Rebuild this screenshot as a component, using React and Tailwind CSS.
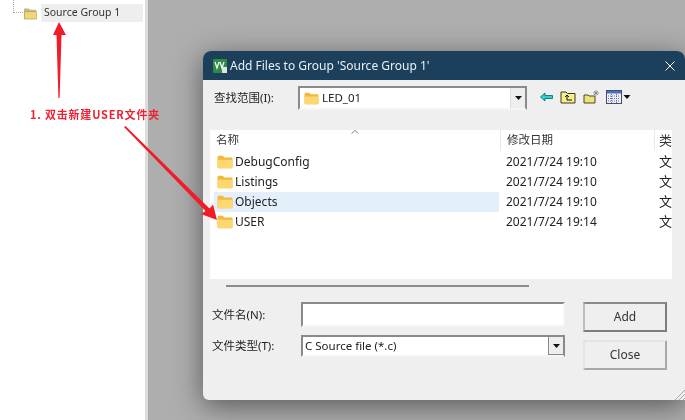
const UI = { fontFamily: '"Noto Sans","Noto Sans CJK SC",sans-serif' };

function Folder({ className = "" }) {
  return (
    <svg viewBox="0 0 16 14" className={className}>
      <path d="M0.5 2.2Q0.5 0.8 1.8 0.8H5.6L7.4 2.4H14.4Q15.5 2.4 15.5 3.5V12.2Q15.5 13.3 14.4 13.3H1.6Q0.5 13.3 0.5 12.2Z" fill="#f3b93a" />
      <path d="M0.5 4.8H15.5V12.2Q15.5 13.3 14.4 13.3H1.6Q0.5 13.3 0.5 12.2Z" fill="#fdd76f" />
    </svg>
  );
}

function Arrow({ className = "" }) {
  return (
    <svg viewBox="0 0 7 4" className={className}>
      <path d="M0 0H7L3.5 4Z" fill="#111" />
    </svg>
  );
}

function Row({ name, date, active }) {
  return (
    <div className="flex h-5 items-center">
      <div className={`ml-1 flex h-5 w-[285px] items-center gap-[2px] pl-[3px] ${active ? "bg-[#e3f0fb]" : ""}`}>
        <Folder className="h-[14px] w-[16px]" />
        <span className="text-[12px] text-[#222]">{name}</span>
      </div>
      <div className="flex h-5 w-[154px] items-center pl-[7px] text-[12px] text-[#222]">{date}</div>
      <div className="pl-[6px] text-[13px] text-[#222]">文</div>
    </div>
  );
}

export default function App() {
  return (
    <div className="flex h-[420px] w-[685px] overflow-hidden bg-white blur-[0.4px]" style={UI}>
      <aside className="w-[145px] shrink-0 bg-white pl-[13px] pr-[2px] pt-[4px]">
        <div className="flex h-[18px] items-center">
          <div className="mb-[9px] mt-[-4px] h-[13px] w-[10px] self-start border-b border-l border-dotted border-[#aaa]" />
          <svg viewBox="0 0 16 14" className="h-[13px] w-[15px]">
            <path d="M1 3V1.5H6L7.5 3H14V13H1Z" fill="#c9b781" />
            <path d="M1.5 5H14.5V13H1.5Z" fill="#efd679" stroke="#a9975f" strokeWidth=".6" />
          </svg>
          <div className="ml-[3px] flex h-[18px] flex-1 items-center bg-[#eeeeee] pl-[3px] text-[10.5px] text-[#333]">
            Source Group 1
          </div>
        </div>
      </aside>
      <div className="w-[3px] shrink-0 bg-[#dcdcdc]" />
      <main className="relative flex-1 bg-[#aeaeae]">
        <section className="absolute left-[55px] top-[51px] flex h-[349px] w-[482px] flex-col overflow-hidden rounded-t-[8px] rounded-bl-[6px] bg-[#efefef] shadow-[0_6px_28px_rgba(30,30,30,0.6)]">
          <header className="flex h-[29px] shrink-0 items-center bg-[#1c3f5b] pl-[10px] pr-[10px] text-white">
            <svg viewBox="0 0 14 14" className="h-[14px] w-[14px]">
              <rect width="14" height="14" rx="1" fill="#2f8a45" />
              <path d="M2 3L4 9L6 3M7 3L9 9L11 3" stroke="#fff" strokeWidth="1.2" fill="none" />
              <path d="M9 8H14V14H9Z" fill="#dfe7dd" />
            </svg>
            <span className="ml-[3px] flex-1 text-[12px] text-[#eaf0f4]">Add Files to Group 'Source Group 1'</span>
            <svg viewBox="0 0 10 10" className="h-[10px] w-[10px]">
              <path d="M0.5 0.5L9.5 9.5M9.5 0.5L0.5 9.5" stroke="#fff" strokeWidth="1" />
            </svg>
          </header>

          <div className="ml-[11px] mt-[6px] flex h-[24px] shrink-0 items-center">
            <span className="w-[84px] text-[11.5px] text-[#222]">查找范围(I):</span>
            <div className="flex h-[24px] w-[229px] items-center border-2 border-b-[#f5f5f5] border-l-[#8a8a8a] border-r-[#8a8a8a] border-t-[#8a8a8a] bg-white pl-[4px]">
              <Folder className="h-[13px] w-[15px]" />
              <span className="ml-[3px] flex-1 text-[11.5px] text-[#222]">LED_01</span>
              <div className="flex h-full w-[15px] items-center justify-center border-l border-[#ddd] bg-[#eeeeee]">
                <Arrow className="h-[4px] w-[7px]" />
              </div>
            </div>
            <div className="mb-[3px] ml-[13px] flex items-center gap-[7px]">
              <svg viewBox="0 0 13 10" className="h-[10px] w-[13px]">
                <path d="M0.5 5L5 1V3.5H12.5V6.5H5V9Z" fill="#29d3cf" stroke="#0b5f60" strokeWidth=".8" />
              </svg>
              <svg viewBox="0 0 16 14" className="h-[14px] w-[16px]">
                <path d="M1 13V2H6L7.5 3.5H15V13Z" fill="#f5ef87" stroke="#3a3a20" />
                <path d="M5 7L7 5L9 7M7 5V10H12" fill="none" stroke="#111" />
              </svg>
              <svg viewBox="0 0 16 14" className="h-[14px] w-[16px]">
                <path d="M1 13V5H5L6 6H12V13Z" fill="#ece27e" stroke="#4a4a25" />
                <path d="M13 0V6M10 3H16M11 1L15 5M15 1L11 5" stroke="#777" strokeWidth=".7" />
              </svg>
              <div className="flex items-center gap-[1px]">
                <svg viewBox="0 0 16 14" className="h-[14px] w-[16px]">
                  <rect x=".5" y=".5" width="15" height="13" fill="#eef0fa" stroke="#4a4a6a" />
                  <rect x="1" y="1" width="14" height="2.5" fill="#4a6fc0" />
                  <path d="M5.5 4V13M10.5 4V13M2 6H14M2 8.5H14M2 11H14" stroke="#5561a5" strokeWidth=".9" strokeDasharray="1 1" />
                </svg>
                <Arrow className="h-[4px] w-[8px]" />
              </div>
            </div>
          </div>

          <div className="ml-[7px] mt-[20px] h-[149px] w-[462px] shrink-0 overflow-hidden bg-white">
            <div className="relative flex h-[21px] text-[11.5px] text-[#333]">
              <div className="w-[290px] pl-[6px] pt-[1px]">名称</div>
              <div className="h-full w-[154px] border-l border-[#e8e8e8] pl-[6px] pt-[1px]">修改日期</div>
              <div className="h-full whitespace-nowrap border-l border-[#e8e8e8] pl-[4px] pt-[1px] text-[13px]">类</div>
              <svg viewBox="0 0 8 4" className="absolute left-[141px] top-[0px] h-[4px] w-[8px]">
                <path d="M0.5 3.5L4 0.5L7.5 3.5" fill="none" stroke="#888" />
              </svg>
            </div>
            <div className="relative mt-[1px] h-[127px]">
              <Row name="DebugConfig" date="2021/7/24 19:10" />
              <Row name="Listings" date="2021/7/24 19:10" />
              <Row name="Objects" date="2021/7/24 19:10" active />
              <Row name="USER" date="2021/7/24 19:14" />
            </div>
          </div>

          <div className="ml-[23px] mt-[6px] h-[2px] w-[303px] shrink-0 bg-[#8c8c8c]" />

          <div className="ml-[9px] mt-[15px] flex">
            <div className="w-[361px]">
              <div className="flex h-[25px] items-center">
                <span className="w-[89px] text-[11.5px] text-[#222]">文件名(N):</span>
                <div className="h-[25px] w-[264px] border-2 border-b-[#f5f5f5] border-l-[#8a8a8a] border-r-[#f5f5f5] border-t-[#8a8a8a] bg-white" />
              </div>
              <div className="mt-[8px] flex h-[22px] items-center">
                <span className="w-[89px] text-[11.5px] text-[#222]">文件类型(T):</span>
                <div className="flex h-[22px] w-[264px] items-center border-2 border-b-[#f5f5f5] border-l-[#8a8a8a] border-r-[#8a8a8a] border-t-[#8a8a8a] bg-white pl-[2px]">
                  <span className="flex-1 text-[11.5px] text-[#222]">C Source file (*.c)</span>
                  <div className="flex h-full w-[15px] items-center justify-center border-b border-l border-[#888] bg-[#eeeeee]">
                    <Arrow className="h-[4px] w-[7px]" />
                  </div>
                </div>
              </div>
            </div>
            <div className="ml-[10px] flex w-[84px] flex-col gap-[8px]">
              <button className="h-[30px] border-2 border-b-[#7d7d7d] border-l-[#bdbdbd] border-r-[#7d7d7d] border-t-[#8a8a8a] bg-[#efefef] text-[12px] text-[#333]">Add</button>
              <button className="h-[30px] border-2 border-b-[#a8a8a8] border-l-[#e4e4e4] border-r-[#a8a8a8] border-t-[#e4e4e4] bg-[#efefef] text-[12px] text-[#333]">Close</button>
            </div>
          </div>

          <svg viewBox="0 0 10 10" className="absolute bottom-0 right-0 h-[10px] w-[10px]">
            <path d="M0 10L10 0M4 10L10 4M8 10L10 8" stroke="#a8a8a8" strokeWidth="1" />
          </svg>
        </section>
      </main>

      <span className="absolute left-[30px] top-[106px] whitespace-nowrap text-[11px] font-bold leading-[16px] tracking-[0.8px] text-[#f02030]" style={{ fontFamily: '"Noto Sans CJK SC","Noto Sans",sans-serif' }}>
        1. 双击新建USER文件夹
      </span>

      <svg viewBox="0 0 685 420" className="pointer-events-none absolute left-0 top-0 h-[420px] w-[685px]">
        <path d="M59 22L66 35H61.5L59.6 98H58.4L56.5 35H53Z" fill="#f01c28" />
        <path d="M124 127L125.5 126L209.5 208.5L213 204.5L217 220L201 214L205.5 211Z" fill="#f01c28" />
      </svg>
    </div>
  );
}
